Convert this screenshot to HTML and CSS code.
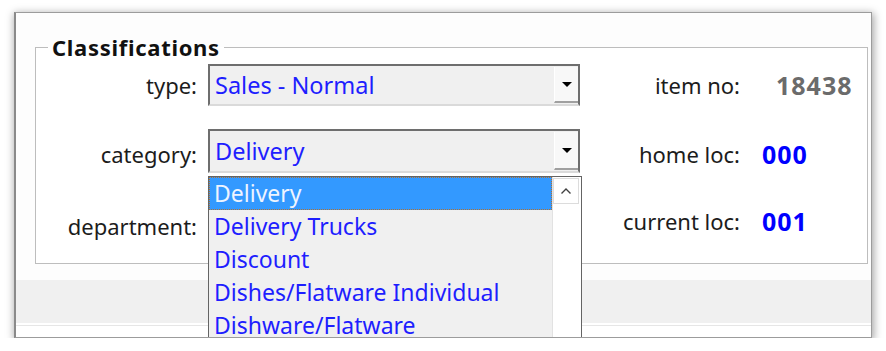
FILE: index.html
```html
<!DOCTYPE html>
<html lang="en">
<head>
  <meta charset="UTF-8">
  <title>Item Classifications</title>
  <link rel="stylesheet" href="styles.css">
</head>
<body>
  <div class="window">
    <fieldset class="groupBox">
      <legend>Classifications</legend>
      <div class="fields">
        <label class="lbl">type:</label>
        <div class="combo">
          <span class="comboText">Sales - Normal</span>
          <span class="comboBtn"><span class="arrowDown"></span></span>
        </div>
        <label class="lbl lblRight">item no:</label>
        <span class="val valGray">18438</span>

        <label class="lbl lower">category:</label>
        <div class="combo comboTall">
          <span class="comboText">Delivery</span>
          <span class="comboBtn"><span class="arrowDown"></span></span>
          <!-- popup list, drawn over the rest of the form -->
          <div class="dropList">
            <ul class="items">
              <li class="sel">Delivery</li>
              <li>Delivery Trucks</li>
              <li>Discount</li>
              <li>Dishes/Flatware Individual</li>
              <li>Dishware/Flatware</li>
            </ul>
            <div class="scroll">
              <span class="scrollUp">
                <svg width="12" height="8" viewBox="0 0 12 8"><path d="M1.5 6.5 L6 2 L10.5 6.5" fill="none" stroke="#404040" stroke-width="1.4"/></svg>
              </span>
            </div>
          </div>
        </div>
        <label class="lbl lblRight lower">home loc:</label>
        <span class="val valBlue lower">000</span>

        <label class="lbl">department:</label>
        <div></div>
        <label class="lbl lblRight higher">current loc:</label>
        <span class="val valBlue higher">001</span>
      </div>
    </fieldset>
    <div class="band"></div>
    <div class="footer"></div>
  </div>
</body>
</html>
```

FILE: styles.css
```css
body {
  margin: 0;
  background: #ffffff;
  font-family: "Noto Sans", "Open Sans", sans-serif;
  color: #1c1c1c;
}
.window {
  margin: 12px 0 0 14px;
  width: 855px;
  height: 324px;
  border: 1px solid #9c9c9c;
  border-left: 2px solid #8a8a8a;
  background: #fdfdfd;
  box-shadow: 1px 2px 8px 1px rgba(0, 0, 0, 0.35);
  display: flex;
  flex-direction: column;
  overflow: hidden;
}
.groupBox {
  margin: 22px 3px 0 19px;
  padding: 5px 0 0 0;
  border: 1px solid #bdbdbd;
  box-shadow: inset 1px 1px 0 #ffffff;
  height: 229px;
  box-sizing: border-box;
  background: #ffffff;
  flex: none;
}
.groupBox legend {
  margin-left: 12px;
  padding: 0 4px;
  font-weight: bold;
  font-size: 22px;
  line-height: 24px;
  color: #111;
  letter-spacing: 0.7px;
}
.fields {
  display: grid;
  grid-template-columns: 172px 372px 160px auto;
  grid-template-rows: 42px 44px 60px;
  row-gap: 23px;
  align-items: center;
}
.lbl {
  font-size: 22px;
  text-align: right;
  padding-right: 11px;
}
.lblRight {
  padding-right: 0;
}
.lower {
  margin-top: 6px;
}
.higher {
  margin-bottom: 10px;
}
.val {
  font-weight: bold;
  font-size: 25px;
  letter-spacing: 1px;
  padding-left: 22px;
}
.valGray {
  color: #6b6b6b;
  padding-left: 36px;
}
.valBlue {
  color: #0000ff;
}
.combo {
  position: relative;
  height: 42px;
  box-sizing: border-box;
  border: 2px solid #6e6e6e;
  border-bottom-color: #dadada;
  background: #f0f0f0;
  display: flex;
  align-items: center;
}
.comboTall {
  height: 44px;
}
.comboText {
  flex: 1;
  padding-left: 5px;
  font-size: 23.5px;
  color: #1e1eff;
}
.comboBtn {
  align-self: stretch;
  width: 23px;
  margin: 1px 0 1px 0;
  background: #f8f8f8;
  border-left: 1px solid #ffffff;
  border-bottom: 2px solid #a0a0a0;
  display: flex;
  align-items: center;
  justify-content: center;
}
.arrowDown {
  width: 0;
  height: 0;
  border-left: 5px solid transparent;
  border-right: 5px solid transparent;
  border-top: 5px solid #000;
}
.dropList {
  position: absolute;
  left: -2px;
  top: 45px;
  width: 374px;
  height: 166px;
  box-sizing: border-box;
  border: 1px solid #646464;
  border-bottom: none;
  background: #f0f0f0;
  display: flex;
  z-index: 2;
}
.items {
  list-style: none;
  margin: 0;
  padding: 0;
  flex: 1;
}
.items li {
  height: 33px;
  line-height: 32px;
  padding-left: 5px;
  font-size: 23px;
  color: #1e1eff;
  white-space: nowrap;
}
.items li.sel {
  background: #3399ff;
  color: #eef4ff;
  outline: 1px dotted #b07030;
  outline-offset: -1px;
}
.scroll {
  width: 26px;
  background: #ffffff;
  border-left: 1px solid #e2e2e2;
  padding: 1px 2px 0 0;
}
.scrollUp {
  display: flex;
  height: 24px;
  align-items: center;
  justify-content: center;
  border: 1px solid #dcdcdc;
  background: #ffffff;
}
.band {
  margin-top: 16px;
  height: 43px;
  flex: none;
  background: #f0f0f0;
  border-bottom: 2px solid #ffffff;
}
.footer {
  flex: 1;
  border-top: 1px solid #e6e6e6;
  background: #ffffff;
}
```
